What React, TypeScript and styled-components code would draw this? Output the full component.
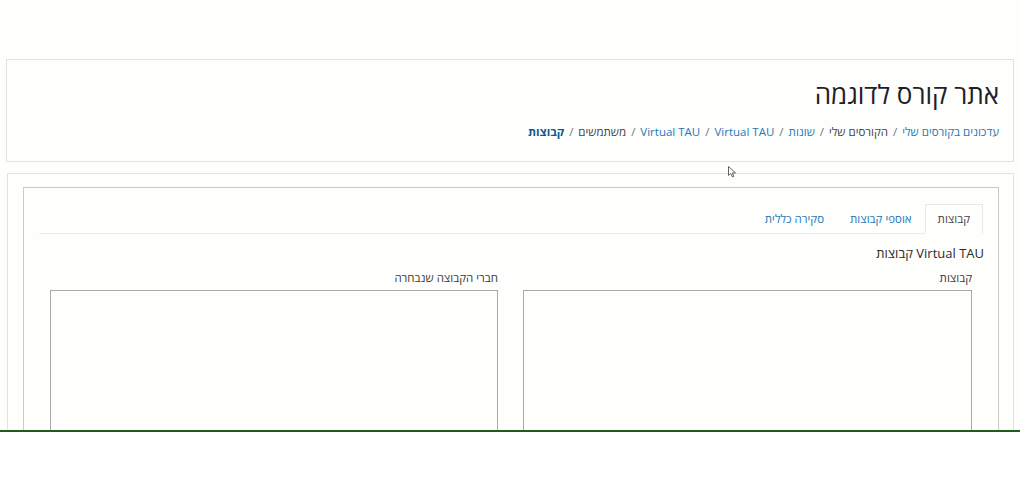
import styled, { createGlobalStyle } from "styled-components";

const GlobalStyle = createGlobalStyle`
    html, body {
        margin: 0;
        padding: 0;
        background: #ffffff;
    }
    body {
        font-family: "Open Sans", "Noto Sans", "DejaVu Sans", sans-serif;
        color: #373a3c;
    }
`;

const Page = styled.div`
    position: relative;
    height: 432px;
    overflow: hidden;
    background: #fefefc;
    border-bottom: 2px solid #1c5c1c;
    padding: 59px 6px 0 6px;
    box-sizing: border-box;
    direction: rtl;
`;

const Card = styled.div`
    border: 1px solid #e2e2e0;
    background: #fefefd;
    box-sizing: border-box;
`;

const HeaderCard = styled(Card)`
    height: 103px;
    padding: 15px 14px 0 14px;
`;

const Title = styled.h1`
    margin: 0;
    font-size: 26px;
    font-weight: 400;
    line-height: 38px;
    color: #1d2125;
`;

const Crumbs = styled.ol`
    display: flex;
    list-style: none;
    margin: 10px 0 0 0;
    padding: 0;
    font-size: 11.5px;
    line-height: 18px;
`;

const Crumb = styled.li<{ $link?: boolean; $current?: boolean }>`
    color: ${p => (p.$current ? "#0a5b93" : p.$link ? "#2479b6" : "#454545")};
    font-weight: ${p => (p.$current ? 700 : 400)};
    &:not(:first-child)::before {
        content: "/";
        color: #6a737b;
        font-weight: 400;
        padding: 0 5px;
    }
`;

const MainCard = styled(Card)`
    margin-top: 11px;
    margin-left: 1px;
    height: 300px;
    padding: 13px 14px 0 15px;
`;

const Inner = styled.div`
    border: 1px solid #cdc9c6;
    border-bottom: none;
    height: 100%;
    padding: 16px 15px 0 15px;
    box-sizing: border-box;
`;

const Tabs = styled.ul`
    display: flex;
    list-style: none;
    margin: 0;
    padding: 0;
    border-bottom: 1px solid #ebebe8;
`;

const Tab = styled.li<{ $active?: boolean }>`
    font-size: 11.5px;
    line-height: 16px;
    padding: 6px 12px 6px 12px;
    margin-bottom: -1px;
    color: ${p => (p.$active ? "#454545" : "#2479b6")};
    border: 1px solid ${p => (p.$active ? "#e8e8e6" : "transparent")};
    border-bottom-color: ${p => (p.$active ? "#fefefd" : "transparent")};
    background: ${p => (p.$active ? "#fefefd" : "transparent")};
`;

const Heading = styled.h2`
    margin: 10px -1px 0 0;
    font-size: 13px;
    font-weight: 400;
    line-height: 18px;
    color: #2b2b2b;
`;

const Columns = styled.div`
    display: grid;
    grid-template-columns: 449px 448px;
    column-gap: 25px;
    padding: 0 11px 0 12px;
    margin-top: 8px;
`;

const Field = styled.div`
    display: flex;
    flex-direction: column;
`;

const Label = styled.label`
    font-size: 11.5px;
    line-height: 16px;
    color: #3a3a3a;
    margin-bottom: 4px;
`;

const ListBox = styled.div`
    height: 200px;
    border: 1px solid #a8a8a8;
    background: #fefefd;
`;

const Cursor = styled.svg`
    position: absolute;
    left: 728px;
    top: 166px;
    direction: ltr;
`;

export default function App() {
    return (
        <>
            <GlobalStyle />
            <Page>
                <HeaderCard>
                    <Title>אתר קורס לדוגמה</Title>
                    <Crumbs>
                        <Crumb $link>עדכונים בקורסים שלי</Crumb>
                        <Crumb>הקורסים שלי</Crumb>
                        <Crumb $link>שונות</Crumb>
                        <Crumb $link>Virtual TAU</Crumb>
                        <Crumb $link>Virtual TAU</Crumb>
                        <Crumb>משתמשים</Crumb>
                        <Crumb $current>קבוצות</Crumb>
                    </Crumbs>
                </HeaderCard>
                <MainCard>
                    <Inner>
                        <Tabs>
                            <Tab $active>קבוצות</Tab>
                            <Tab>אוספי קבוצות</Tab>
                            <Tab>סקירה כללית</Tab>
                        </Tabs>
                        <Heading>Virtual TAU קבוצות</Heading>
                        <Columns>
                            <Field>
                                <Label>קבוצות</Label>
                                <ListBox />
                            </Field>
                            <Field>
                                <Label>חברי הקבוצה שנבחרה</Label>
                                <ListBox />
                            </Field>
                        </Columns>
                    </Inner>
                </MainCard>
                <Cursor width="9" height="12" viewBox="0 0 9 12">
                    <path d="M0.5 0.5 L0.5 9.5 L2.8 7.4 L4.4 11 L5.8 10.4 L4.3 6.9 L7.5 6.9 Z" fill="#ffffff" stroke="#555" strokeWidth="0.9" />
                </Cursor>
            </Page>
        </>
    );
}
